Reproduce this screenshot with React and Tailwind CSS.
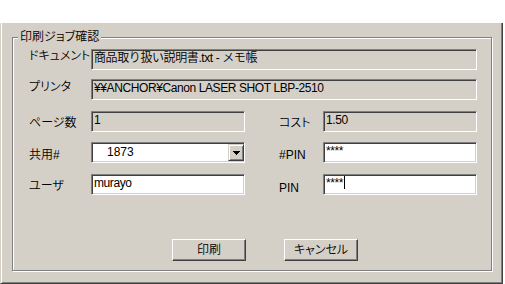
import React from "react";

const font = { fontFamily: '"Liberation Sans", "Noto Sans CJK JP", sans-serif' };

function Sunken({ w, white, children, className = "" }) {
  return (
    <div
      className={`relative box-border h-[21px] border-t border-l border-t-[#808080] border-l-[#808080] border-b border-r border-b-white border-r-white shadow-[inset_1px_1px_0_#404040,inset_-1px_-1px_0_#d4d0c8] ${white ? "bg-white" : "bg-[#d4d0c8]"} ${w} ${className}`}
    >
      <div className="flex h-full items-start pl-[2px] pt-[1px] text-[12px] leading-[14px] font-[350] tracking-[-0.4px] text-black whitespace-nowrap">
        {children}
      </div>
    </div>
  );
}

function Label({ children, w, pt }) {
  return (
    <div className={`${w} ${pt} text-[12px] leading-[13px] font-[350] text-black whitespace-nowrap [font-feature-settings:'palt']`}>
      {children}
    </div>
  );
}

function Button({ children }) {
  return (
    <div className="box-border flex h-[22px] w-[74px] items-center justify-center border-t border-l border-t-white border-l-white border-b border-r border-b-[#404040] border-r-[#404040] bg-[#d4d0c8] shadow-[inset_-1px_-1px_0_#808080] text-[12px] leading-[13px] font-[350] text-black [font-feature-settings:'palt']">
      {children}
    </div>
  );
}

export default function App() {
  return (
    <div className="h-[284px] w-[505px] overflow-hidden bg-white" style={font}>
      <div className="mt-[23px] box-border h-[261px] w-[503px] border-l border-l-[#d4d0c8] border-r border-r-[#404040] border-b border-b-[#404040] bg-[#d4d0c8] shadow-[inset_1px_0_0_white,inset_-1px_-1px_0_#808080] pt-[14px] pl-[11px]">
        <div className="relative box-border h-[234px] w-[480px] border border-[#808080] shadow-[1px_1px_0_white,inset_1px_1px_0_white] pl-[16px] pt-[11px]">
          <div className="absolute left-[5px] top-[-7px] bg-[#d4d0c8] px-[2px] text-[12px] leading-[12px] font-[350] text-black [font-feature-settings:'palt']">
            印刷ジョブ確認
          </div>

          <div className="flex items-start">
            <Label w="w-[62px]" pt="pt-[1px]">ドキュメント</Label>
            <Sunken w="w-[386px]">商品取り扱い説明書.txt - メモ帳</Sunken>
          </div>

          <div className="mt-[9px] flex items-start">
            <Label w="w-[62px]" pt="pt-[2px]">プリンタ</Label>
            <Sunken w="w-[386px]">¥¥ANCHOR¥Canon LASER SHOT LBP-2510</Sunken>
          </div>

          <div className="mt-[11px] flex items-start">
            <Label w="w-[62px]" pt="pt-[6px]">ページ数</Label>
            <Sunken w="w-[154px]">1</Sunken>
            <div className="w-[34px]" />
            <Label w="w-[44px]" pt="pt-[6px]">コスト</Label>
            <Sunken w="w-[154px]">1.50</Sunken>
          </div>

          <div className="mt-[10px] flex items-start">
            <Label w="w-[62px]" pt="pt-[7px]">共用#</Label>
            <div className="box-border flex h-[21px] w-[154px] border-t border-l border-t-[#808080] border-l-[#808080] border-b border-r border-b-white border-r-white bg-white shadow-[inset_1px_1px_0_#404040,inset_-1px_-1px_0_#d4d0c8] pt-[1px] pl-[1px]">
              <div className="flex-1 pl-[14px] pt-[1px] text-[12px] leading-[14px] font-[350] text-black">1873</div>
              <div className="box-border flex h-[17px] w-[16px] items-center justify-center border-t border-l border-t-[#d4d0c8] border-l-[#d4d0c8] border-b border-r border-b-[#404040] border-r-[#404040] bg-[#d4d0c8] shadow-[inset_1px_1px_0_white,inset_-1px_-1px_0_#808080]">
                <svg width="7" height="4" viewBox="0 0 7 4" shapeRendering="crispEdges">
                  <path d="M0 0h7v1H0zM1 1h5v1H1zM2 2h3v1H2zM3 3h1v1H3z" fill="#000" />
                </svg>
              </div>
            </div>
            <div className="w-[34px]" />
            <Label w="w-[44px]" pt="pt-[7px]">#PIN</Label>
            <Sunken w="w-[154px]" white>****</Sunken>
          </div>

          <div className="mt-[11px] flex items-start">
            <Label w="w-[62px]" pt="pt-[6px]">ユーザ</Label>
            <Sunken w="w-[154px]" white>murayo</Sunken>
            <div className="w-[34px]" />
            <Label w="w-[44px]" pt="pt-[8px]">PIN</Label>
            <Sunken w="w-[154px]" white>
              ****<span className="ml-[1px] inline-block h-[13px] w-[1px] bg-black" />
            </Sunken>
          </div>

          <div className="mt-[44px] ml-[143px] flex gap-[38px]">
            <Button>印刷</Button>
            <Button>キャンセル</Button>
          </div>
        </div>
      </div>
    </div>
  );
}
